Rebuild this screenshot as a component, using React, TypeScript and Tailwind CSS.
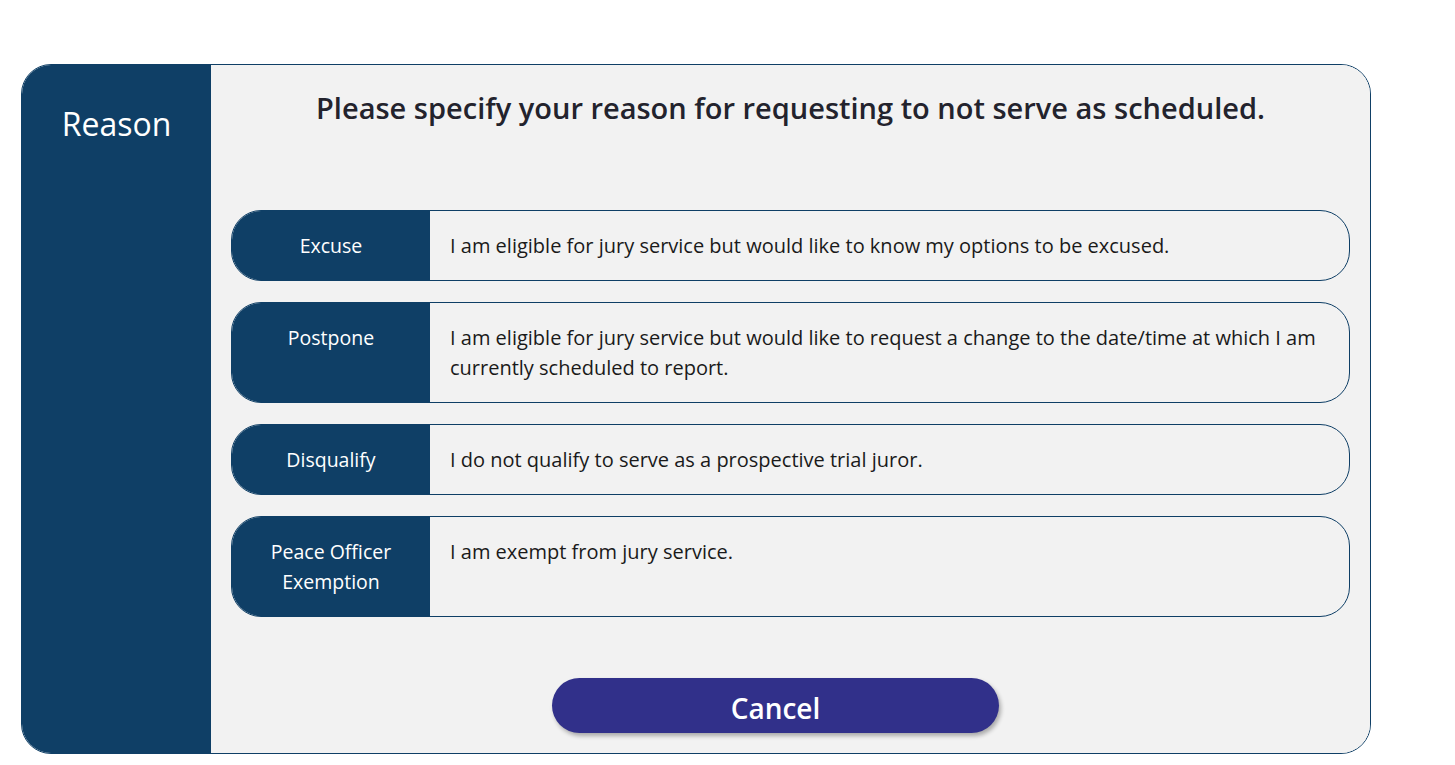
import React from "react";

const rows = [
  { label: "Excuse", text: "I am eligible for jury service but would like to know my options to be excused.", h: "h-[71px]" },
  { label: "Postpone", text: "I am eligible for jury service but would like to request a change to the date/time at which I am currently scheduled to report.", h: "h-[101px]" },
  { label: "Disqualify", text: "I do not qualify to serve as a prospective trial juror.", h: "h-[71px]" },
  { label: "Peace Officer Exemption", text: "I am exempt from jury service.", h: "h-[101px]" },
];

export default function App() {
  return (
    <div className="w-[1455px] h-[765px] bg-white" style={{ fontFamily: '"Open Sans", "Noto Sans", sans-serif' }}>
      <div className="pt-[64px] pl-[21px]">
        <div className="w-[1350px] h-[690px] rounded-[30px] border border-[#0f3f66] overflow-hidden flex">
          <div className="w-[189px] bg-[#0f3f66] flex justify-center pt-[37px]">
            <div className="text-white text-[32px] leading-[44px]">Reason</div>
          </div>
          <div className="flex-1 bg-[#f2f2f2] flex flex-col">
            <div className="pt-[23px] text-center text-[29px] leading-[40px] font-semibold text-[#23232d]">
              Please specify your reason for requesting to not serve as scheduled.
            </div>
            <div className="mt-[82px] px-[20px] flex flex-col gap-[21px]">
              {rows.map((r) => (
                <div key={r.label} className={`flex ${r.h} rounded-[30px] border border-[#0f3f66] overflow-hidden`}>
                  <div className="w-[198px] bg-[#0f3f66] text-white text-[19.5px] leading-[30px] text-center pt-[20px] px-[10px]">
                    {r.label}
                  </div>
                  <div className="flex-1 pl-[20px] pr-[24px] pt-[20px] text-[20px] leading-[30px] text-[#1a1a1a]">
                    {r.text}
                  </div>
                </div>
              ))}
            </div>
            <div className="mt-[61px] flex justify-center pr-[30px]">
              <button className="w-[447px] h-[55px] rounded-full bg-[#31308a] text-white text-[28px] leading-[55px] pt-[3px] font-semibold shadow-[2px_3px_4px_rgba(0,0,0,0.3)]">
                Cancel
              </button>
            </div>
          </div>
        </div>
      </div>
    </div>
  );
}
